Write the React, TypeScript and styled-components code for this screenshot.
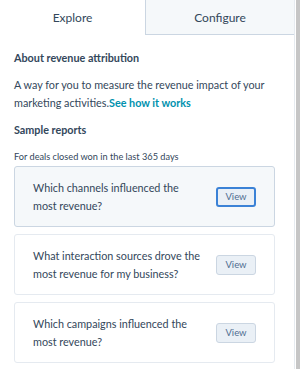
import React from "react";
import styled, { createGlobalStyle } from "styled-components";

const Global = createGlobalStyle`
  html, body { margin: 0; padding: 0; background: #fff; }
  body { font-family: "Lato", "Noto Sans", sans-serif; color: #33475b; }
  * { box-sizing: border-box; }
`;

const Frame = styled.div`
  display: flex;
  width: 300px;
  height: 369px;
  overflow: hidden;
`;

const Panel = styled.div`
  flex: 1;
  display: flex;
  flex-direction: column;
  min-width: 0;
`;

const ScrollTrack = styled.div`
  width: 6px;
  display: flex;
  border-left: 1px solid #e6ebf0;
  padding-left: 1px;
  background: #fff;
`;

const Thumb = styled.div`
  flex: 1;
  background: #c6c6c6;
`;

const Tabs = styled.div`
  display: flex;
  height: 35px;
`;

const Tab = styled.div<{ $active?: boolean }>`
  flex: ${(p) => (p.$active ? "0 0 145px" : "1")};
  display: flex;
  align-items: center;
  justify-content: center;
  font-size: 12px;
  color: #33475b;
  background: ${(p) => (p.$active ? "#fff" : "#f5f8fa")};
  border-left: ${(p) => (p.$active ? "none" : "1px solid #cbd6e2")};
  border-bottom: ${(p) => (p.$active ? "none" : "1px solid #cbd6e2")};
`;

const Content = styled.div`
  padding: 14px 19px 0 14px;
  display: flex;
  flex-direction: column;
`;

const Heading = styled.h3`
  margin: 0;
  font-size: 10.8px;
  font-weight: 700;
  line-height: 18px;
  color: #33475b;
`;

const Body = styled.p`
  margin: 9px 0 9px;
  font-size: 10.8px;
  line-height: 18px;
  color: #33475b;
`;

const Link = styled.a`
  color: #0091ae;
  font-weight: 700;
  text-decoration: none;
`;

const Note = styled.div`
  margin-top: 11px;
  font-size: 9.2px;
  line-height: 14px;
  color: #33475b;
`;

const Cards = styled.div`
  margin-top: 2px;
  display: flex;
  flex-direction: column;
  gap: 7px;
`;

const Card = styled.div<{ $hover?: boolean }>`
  height: 61px;
  display: flex;
  align-items: center;
  justify-content: space-between;
  padding: 0 18px 0 18px;
  border-radius: 3px;
  background: ${(p) => (p.$hover ? "#f5f8fa" : "#fff")};
  border: 1px solid ${(p) => (p.$hover ? "#cbd6e2" : "#e5eaf0")};
`;

const Question = styled.div`
  width: 170px;
  font-size: 10.8px;
  line-height: 18px;
  color: #33475b;
`;

const ViewButton = styled.button<{ $focus?: boolean }>`
  width: 40px;
  height: 20px;
  padding: 0;
  font-family: inherit;
  font-size: 9.5px;
  color: #506e91;
  background: #eaf0f6;
  border-radius: 3px;
  border: ${(p) => (p.$focus ? "2px solid #3b82d6" : "1px solid #cbd6e2")};
  cursor: pointer;
`;

const reports = [
  { q: "Which channels influenced the most revenue?", hover: true },
  { q: "What interaction sources drove the most revenue for my business?", hover: false },
  { q: "Which campaigns influenced the most revenue?", hover: false },
];

export default function App() {
  return (
    <>
      <Global />
      <Frame>
        <Panel>
          <Tabs>
            <Tab $active>Explore</Tab>
            <Tab>Configure</Tab>
          </Tabs>
          <Content>
            <Heading>About revenue attribution</Heading>
            <Body>
              A way for you to measure the revenue impact of your marketing activities.
              <Link href="#">See how it works</Link>
            </Body>
            <Heading>Sample reports</Heading>
            <Note>For deals closed won in the last 365 days</Note>
            <Cards>
              {reports.map((r) => (
                <Card key={r.q} $hover={r.hover}>
                  <Question>{r.q}</Question>
                  <ViewButton $focus={r.hover}>View</ViewButton>
                </Card>
              ))}
            </Cards>
          </Content>
        </Panel>
        <ScrollTrack>
          <Thumb />
        </ScrollTrack>
      </Frame>
    </>
  );
}
